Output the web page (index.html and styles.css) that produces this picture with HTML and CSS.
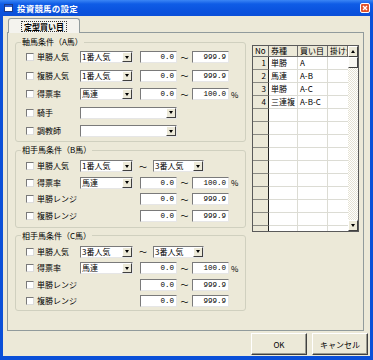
FILE: index.html
```html
<!DOCTYPE html>
<html lang="ja">
<head>
<meta charset="utf-8">
<title>投資競馬の設定</title>
<link rel="stylesheet" href="styles.css">
</head>
<body>
<div class="window">
  <div class="titlebar">
    <svg class="ticon" viewBox="0 0 9 8" width="9" height="8"><rect x="0.5" y="0.5" width="8" height="7" fill="#fff" stroke="#1a3a8a"/><rect x="1" y="1" width="7" height="2" fill="#2a5bd0"/></svg>
    <span class="title">投資競馬の設定</span>
    <span class="close"><svg viewBox="0 0 10 10" width="10" height="10"><path d="M3 3 L7 7 M7 3 L3 7" stroke="#fff" stroke-width="1.4"/></svg></span>
  </div>
  <div class="client">
    <div class="tabs">
      <div class="tab"><span class="tablabel">定型買い目</span></div>
    </div>
    <div class="panel">
      <div class="groups">
        <fieldset class="grp grp-a">
          <legend>軸馬条件（A馬）</legend>
          <div class="rows">
            <div class="row"><span class="chk"></span><span class="lbl">単勝人気</span><span class="sel"><span class="val">1番人気</span><span class="drop"></span></span><span class="num">0.0</span><span class="tilde">～</span><span class="num">999.9</span></div>
            <div class="row"><span class="chk"></span><span class="lbl">複勝人気</span><span class="sel"><span class="val">1番人気</span><span class="drop"></span></span><span class="num">0.0</span><span class="tilde">～</span><span class="num">999.9</span></div>
            <div class="row"><span class="chk"></span><span class="lbl">得票率</span><span class="sel"><span class="val">馬連</span><span class="drop"></span></span><span class="num">0.0</span><span class="tilde">～</span><span class="num">100.0</span><span class="pct">%</span></div>
            <div class="row"><span class="chk"></span><span class="lbl">騎手</span><span class="sel long"><span class="val"></span><span class="drop"></span></span></div>
            <div class="row"><span class="chk"></span><span class="lbl">調教師</span><span class="sel long"><span class="val"></span><span class="drop"></span></span></div>
          </div>
        </fieldset>
        <fieldset class="grp grp-b">
          <legend>相手馬条件（B馬）</legend>
          <div class="rows">
            <div class="row"><span class="chk"></span><span class="lbl">単勝人気</span><span class="sel"><span class="val">1番人気</span><span class="drop"></span></span><span class="tilde wide">～</span><span class="sel short"><span class="val">3番人気</span><span class="drop"></span></span></div>
            <div class="row"><span class="chk"></span><span class="lbl">得票率</span><span class="sel"><span class="val">馬連</span><span class="drop"></span></span><span class="num">0.0</span><span class="tilde">～</span><span class="num">100.0</span><span class="pct">%</span></div>
            <div class="row"><span class="chk"></span><span class="lbl">単勝レンジ</span><span class="spacer"></span><span class="num">0.0</span><span class="tilde">～</span><span class="num">999.9</span></div>
            <div class="row"><span class="chk"></span><span class="lbl">複勝レンジ</span><span class="spacer"></span><span class="num">0.0</span><span class="tilde">～</span><span class="num">999.9</span></div>
          </div>
        </fieldset>
        <fieldset class="grp grp-c">
          <legend>相手馬条件（C馬）</legend>
          <div class="rows">
            <div class="row"><span class="chk"></span><span class="lbl">単勝人気</span><span class="sel"><span class="val">3番人気</span><span class="drop"></span></span><span class="tilde wide">～</span><span class="sel short"><span class="val">3番人気</span><span class="drop"></span></span></div>
            <div class="row"><span class="chk"></span><span class="lbl">得票率</span><span class="sel"><span class="val">馬連</span><span class="drop"></span></span><span class="num">0.0</span><span class="tilde">～</span><span class="num">100.0</span><span class="pct">%</span></div>
            <div class="row"><span class="chk"></span><span class="lbl">単勝レンジ</span><span class="spacer"></span><span class="num">0.0</span><span class="tilde">～</span><span class="num">999.9</span></div>
            <div class="row"><span class="chk"></span><span class="lbl">複勝レンジ</span><span class="spacer"></span><span class="num">0.0</span><span class="tilde">～</span><span class="num">999.9</span></div>
          </div>
        </fieldset>
      </div>
      <div class="list">
        <div class="grid">
          <div class="lrow head"><span class="c no">No</span><span class="c kind">券種</span><span class="c buy">買い目</span><span class="c amt">掛け金</span></div>
          <div class="lrow"><span class="c no">1</span><span class="c kind">単勝</span><span class="c buy">A</span><span class="c amt"></span></div>
          <div class="lrow"><span class="c no">2</span><span class="c kind">馬連</span><span class="c buy">A-B</span><span class="c amt"></span></div>
          <div class="lrow"><span class="c no">3</span><span class="c kind">単勝</span><span class="c buy">A-C</span><span class="c amt"></span></div>
          <div class="lrow"><span class="c no">4</span><span class="c kind">三連複</span><span class="c buy">A-B-C</span><span class="c amt"></span></div>
          <div class="lrow"><span class="c no"></span><span class="c kind"></span><span class="c buy"></span><span class="c amt"></span></div>
          <div class="lrow"><span class="c no"></span><span class="c kind"></span><span class="c buy"></span><span class="c amt"></span></div>
          <div class="lrow"><span class="c no"></span><span class="c kind"></span><span class="c buy"></span><span class="c amt"></span></div>
          <div class="lrow"><span class="c no"></span><span class="c kind"></span><span class="c buy"></span><span class="c amt"></span></div>
          <div class="lrow"><span class="c no"></span><span class="c kind"></span><span class="c buy"></span><span class="c amt"></span></div>
          <div class="lrow"><span class="c no"></span><span class="c kind"></span><span class="c buy"></span><span class="c amt"></span></div>
          <div class="lrow"><span class="c no"></span><span class="c kind"></span><span class="c buy"></span><span class="c amt"></span></div>
          <div class="lrow"><span class="c no"></span><span class="c kind"></span><span class="c buy"></span><span class="c amt"></span></div>
          <div class="lrow"><span class="c no"></span><span class="c kind"></span><span class="c buy"></span><span class="c amt"></span></div>
          <div class="lrow"><span class="c no"></span><span class="c kind"></span><span class="c buy"></span><span class="c amt"></span></div>
        </div>
        <div class="vscroll">
          <span class="sbtn up"></span>
          <span class="thumb"></span>
          <span class="track"></span>
          <span class="sbtn down"></span>
        </div>
      </div>
    </div>
    <div class="buttons">
      <span class="btn">OK</span>
      <span class="btn">キャンセル</span>
    </div>
  </div>
</div>
</body>
</html>
```

FILE: styles.css
```css
* { box-sizing: border-box; }
html, body { margin: 0; padding: 0; }
body {
  font-family: "Noto Sans CJK JP", "Noto Sans", sans-serif;
  font-size: 8px;
  color: #000;
  background: #fff;
}
.window {
  width: 373px;
  height: 360px;
  background: #0a4fd8;
  display: flex;
  flex-direction: column;
  overflow: hidden;
}
.titlebar {
  height: 16px;
  flex: none;
  display: flex;
  align-items: center;
  padding: 0 3px 0 4px;
  background: linear-gradient(#3b86f5, #0f5ce6 25%, #0a52de 70%, #0a4fd8);
}
.ticon { flex: none; margin-right: 4px; }
.title {
  flex: 1;
  color: #fff;
  font-weight: bold;
  font-size: 8.5px;
  line-height: 10px;
  letter-spacing: 0.2px;
}
.close {
  width: 10px;
  height: 10px;
  flex: none;
  display: flex;
  background: #e0522a;
  border: 1px solid #fff;
  border-radius: 2px;
  overflow: hidden;
}
.close svg { margin: -1px; }
.client {
  flex: 1;
  margin: 0 3px 4px;
  background: #ece9d8;
  display: flex;
  flex-direction: column;
}
.tabs {
  padding: 2px 0 0 5px;
  display: flex;
  height: 16px;
  flex: none;
}
.tab {
  width: 72px;
  height: 15px;
  position: relative;
  z-index: 1;
  background: #f4f3ee;
  border: 1px solid #919b9c;
  border-bottom: none;
  border-radius: 3px 3px 0 0;
  display: flex;
  align-items: center;
  justify-content: center;
}
.tablabel {
  border: 1px dotted #333;
  padding: 0 2px;
  line-height: 9px;
  font-weight: bold;
  font-size: 8px;
}
.panel {
  margin-left: 4px;
  width: 357px;
  height: 299px;
  flex: none;
  border: 1px solid #919b9c;
  background: #ece9d8;
  display: flex;
  padding: 4px 0 0 7px;
}
.groups {
  width: 231px;
  display: flex;
  flex-direction: column;
  gap: 3px;
}
.grp {
  margin: 0;
  min-width: 0;
  border: 1px solid #d0d0bf;
  border-radius: 3px;
  padding: 4px 0 4px 10px;
}
.grp legend {
  font-size: 8px;
  line-height: 10px;
  padding: 0 1px;
  margin-left: -5px;
}
.rows { display: flex; flex-direction: column; }
.grp-a .rows { gap: 6.5px; }
.grp-b .rows, .grp-c .rows { gap: 4.5px; }
.grp-b { padding-top: 5px; padding-bottom: 5px; }
.grp-c { padding-top: 5px; padding-bottom: 3px; }
.row {
  height: 12px;
  display: flex;
  align-items: center;
  white-space: nowrap;
}
.chk {
  width: 8px;
  height: 8px;
  flex: none;
  margin-right: 3px;
  background: #fff;
  border: 1px solid;
  border-color: #7a7a7a #dcdcdc #dcdcdc #7a7a7a;
}
.lbl { width: 43px; flex: none; line-height: 12px; }
.sel {
  width: 53px;
  height: 12px;
  flex: none;
  display: flex;
  align-items: center;
  background: #fff;
  border: 1px solid;
  border-color: #7a7a7a #e6e6e6 #e6e6e6 #7a7a7a;
}
.sel.long { width: 97px; }
.sel.short { width: 51px; }
.sel .val {
  flex: 1;
  padding-left: 1px;
  overflow: hidden;
  line-height: 10px;
}
.drop {
  width: 10px;
  height: 10px;
  flex: none;
  display: flex;
  align-items: center;
  justify-content: center;
  background: #ece9d8;
  border: 1px solid;
  border-color: #fff #404040 #404040 #fff;
}
.drop::after {
  content: "";
  border-left: 2.5px solid transparent;
  border-right: 2.5px solid transparent;
  border-top: 3px solid #000;
}
.spacer { width: 53px; flex: none; }
.num {
  width: 37px;
  height: 12px;
  flex: none;
  margin-left: 7px;
  background: #fff;
  border: 1px solid;
  border-color: #7a7a7a #e6e6e6 #e6e6e6 #7a7a7a;
  text-align: right;
  padding-right: 2px;
  font-family: "Liberation Mono", "DejaVu Sans Mono", monospace;
  font-size: 7.5px;
  line-height: 10px;
}
.tilde { width: 15px; flex: none; text-align: center; }
.tilde + .num { margin-left: 0; }
.tilde.wide { width: 20px; }
.pct { margin-left: 2px; }

.list {
  margin: 8px 0 0 6px;
  width: 107px;
  height: 187px;
  flex: none;
  display: flex;
  border: 1px solid #5a5a5a;
  background: #fff;
}
.grid { flex: 1; overflow: hidden; }
.lrow {
  display: flex;
  height: 13px;
}
.lrow.head { height: 11px; }
.c {
  flex: none;
  overflow: hidden;
  white-space: nowrap;
  padding-left: 2px;
  line-height: 12px;
  border-right: 1px solid #dcdcd4;
  border-bottom: 1px solid #dcdcd4;
}
.c.no {
  width: 16px;
  background: #ece9d8;
  text-align: right;
  padding: 0 2px 0 0;
  border-right: 1px solid #222;
  border-bottom: 1px solid #8a8a82;
}
.c.kind { width: 29px; }
.c.buy { width: 30px; }
.c.amt { width: 20px; border-right: none; }
.head .c {
  background: #ece9d8;
  line-height: 10px;
  border-right: 1px solid #6a6a6a;
  border-bottom: 1px solid #6a6a6a;
}
.head .c.no { text-align: left; padding-left: 2px; }
.vscroll {
  width: 10px;
  flex: none;
  display: flex;
  flex-direction: column;
}
.sbtn, .thumb {
  height: 11px;
  flex: none;
  background: #ece9d8;
  border: 1px solid;
  border-color: #fff #404040 #404040 #fff;
  display: flex;
  align-items: center;
  justify-content: center;
}
.thumb { background: #f7f6f1; }
.sbtn.up::after {
  content: "";
  border-left: 2.5px solid transparent;
  border-right: 2.5px solid transparent;
  border-bottom: 3px solid #000;
}
.sbtn.down::after {
  content: "";
  border-left: 2.5px solid transparent;
  border-right: 2.5px solid transparent;
  border-top: 3px solid #000;
}
.track {
  flex: 1;
  background: repeating-conic-gradient(#fff 0 25%, #e6e3d4 0 50%) 0 0 / 2px 2px;
}
.buttons {
  display: flex;
  justify-content: flex-end;
  gap: 5px;
  margin-top: 2px;
  padding-right: 2px;
}
.btn {
  width: 56px;
  height: 22px;
  display: flex;
  align-items: center;
  justify-content: center;
  background: #ece9d8;
  border: 1px solid;
  border-color: #fff #404040 #404040 #fff;
  box-shadow: inset -1px -1px #9a9a90;
}
```
